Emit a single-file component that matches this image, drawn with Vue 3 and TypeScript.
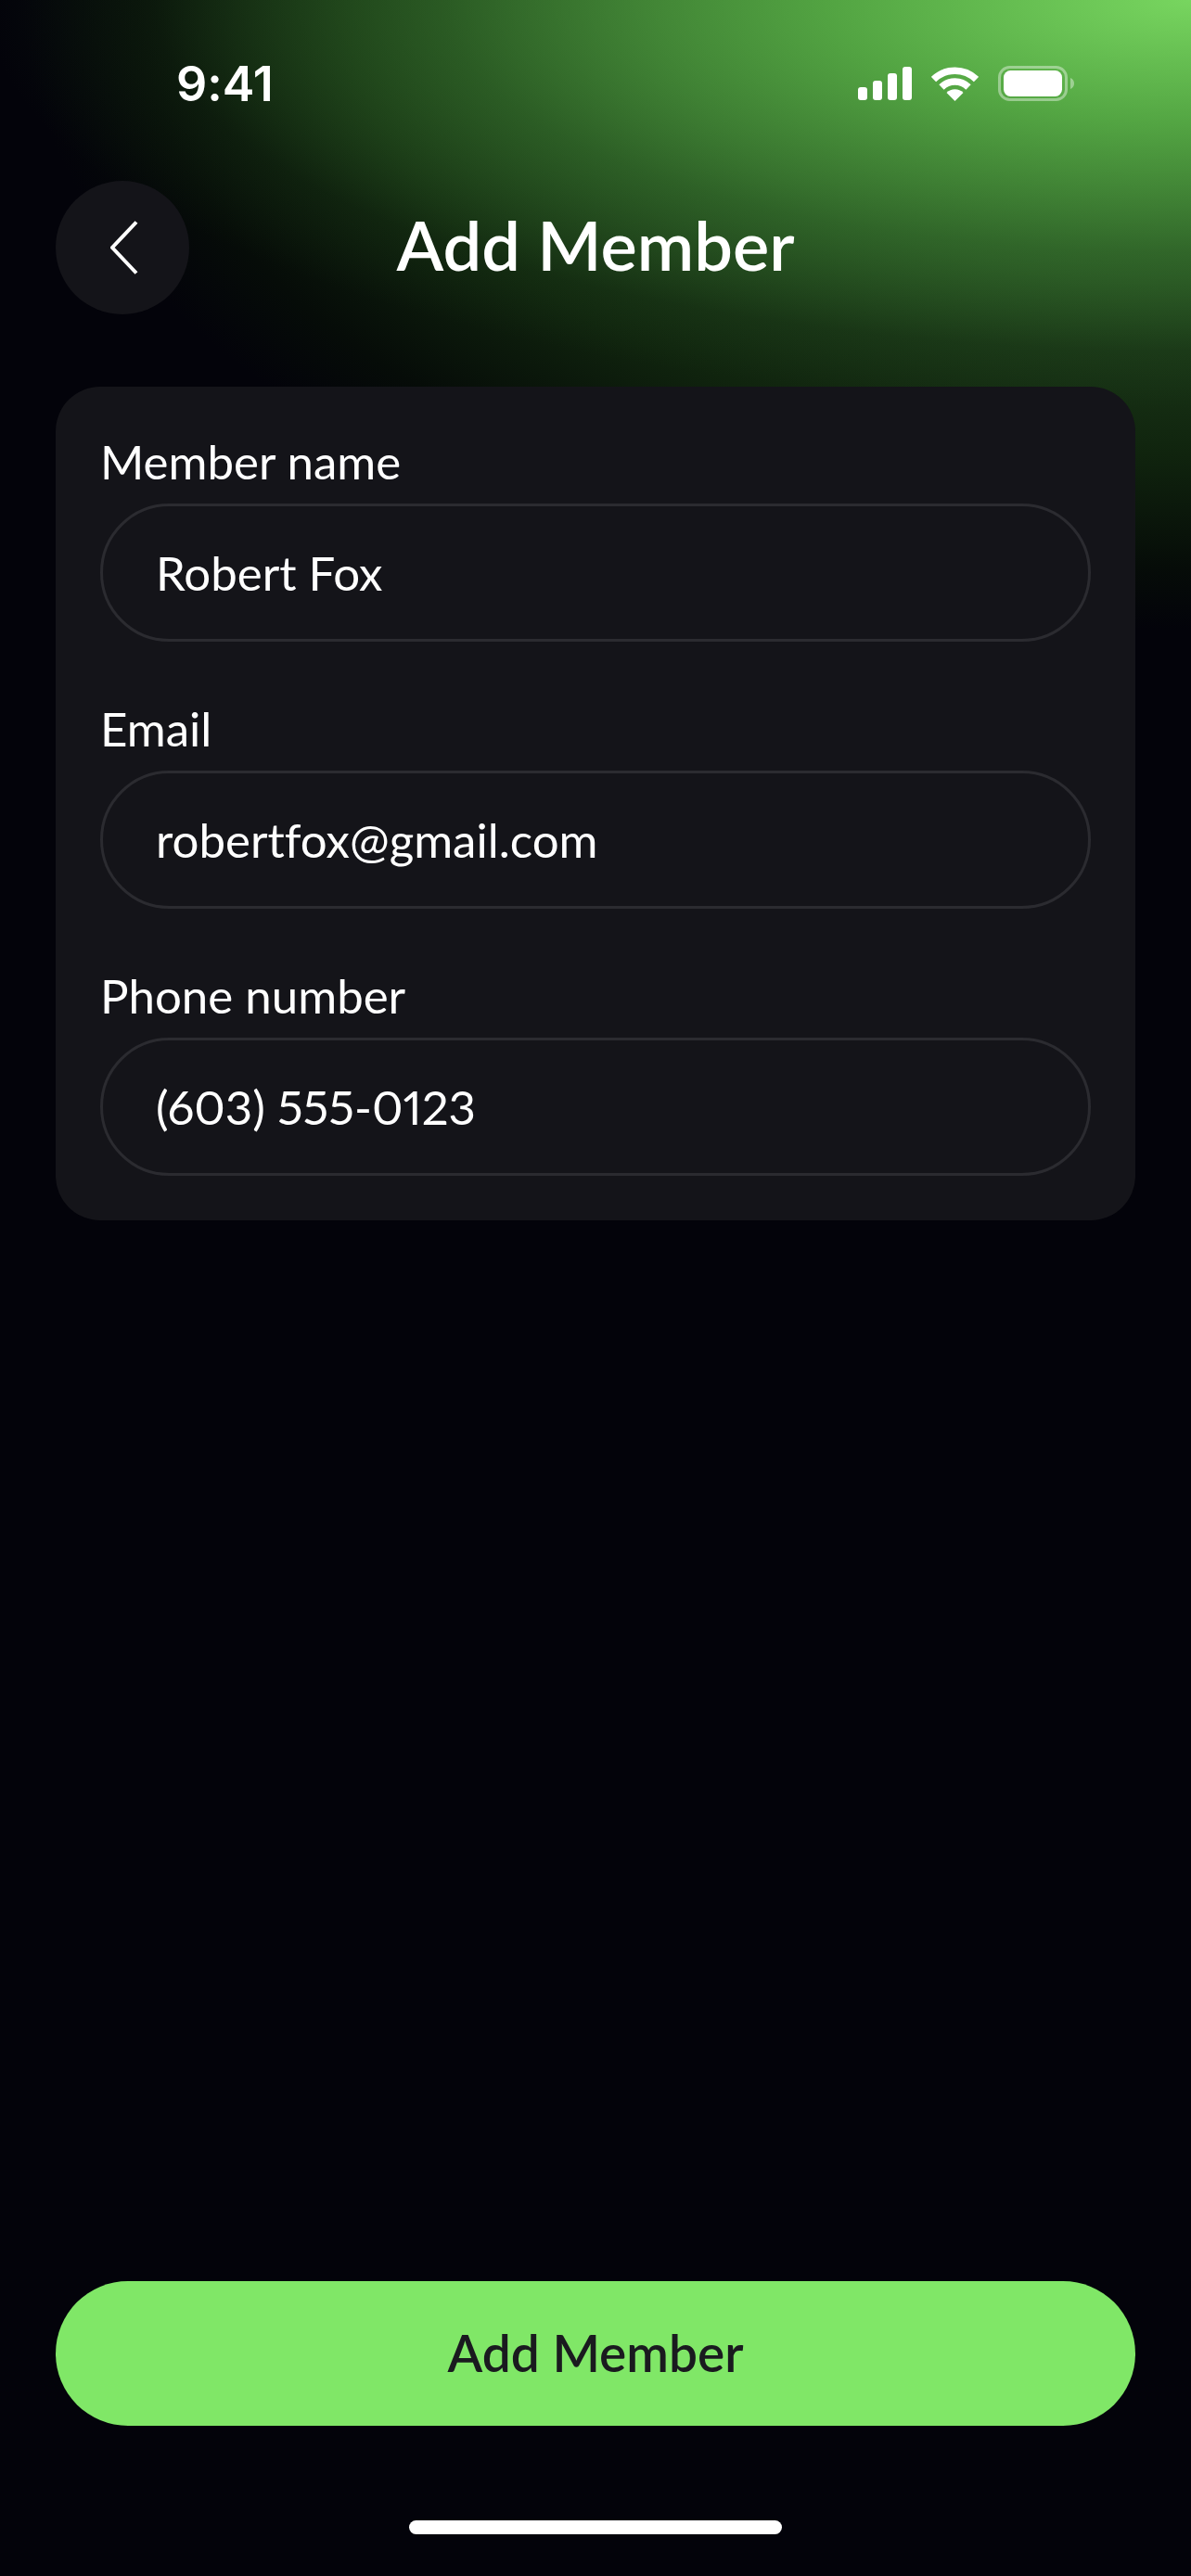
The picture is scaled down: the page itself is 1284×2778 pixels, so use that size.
<script setup lang="ts">
interface Field {
  label: string
  value: string
}

const fields: Field[] = [
  { label: 'Member name', value: 'Robert Fox' },
  { label: 'Email', value: 'robertfox@gmail.com' },
  { label: 'Phone number', value: '(603) 555-0123' },
]
</script>

<template>
  <div class="page">
    <div class="status-bar">
      <span class="time">9:41</span>
      <div class="status-icons">
        <svg width="58" height="36" viewBox="0 0 58 36" fill="#fff">
          <rect x="0" y="22" width="10" height="14" rx="3" />
          <rect x="16" y="15" width="10" height="21" rx="3" />
          <rect x="32" y="7" width="10" height="29" rx="3" />
          <rect x="48" y="0" width="10" height="36" rx="3" />
        </svg>
        <svg width="51" height="37" viewBox="0 0 51 37" fill="none" stroke="#fff">
          <path d="M2.5 13.5a33 33 0 0 1 46 0" stroke-width="7.5" />
          <path d="M11 22a20.5 20.5 0 0 1 29 0" stroke-width="7.5" />
          <path d="M16.5 28a12.8 12.8 0 0 1 18 0L25.5 37z" fill="#fff" stroke="none" />
        </svg>
        <svg width="82" height="38" viewBox="0 0 82 38" fill="none">
          <rect x="1.5" y="1.5" width="72" height="35" rx="11" stroke="#fff" stroke-opacity="0.4" stroke-width="3" />
          <rect x="6" y="5" width="63" height="28" rx="7.5" fill="#fff" />
          <path d="M78 13c2.5 1 4 3.2 4 6s-1.5 5-4 6z" fill="#fff" fill-opacity="0.4" />
        </svg>
      </div>
    </div>

    <header class="header">
      <button class="back" type="button" aria-label="Back">
        <svg width="30" height="58" viewBox="0 0 30 58" fill="none" stroke="#fff" stroke-width="4">
          <path d="M28 1.5 2 29l26 27.5" />
        </svg>
      </button>
      <h1>Add Member</h1>
    </header>

    <section class="card">
      <div v-for="field in fields" :key="field.label" class="field">
        <label>{{ field.label }}</label>
        <div class="input">{{ field.value }}</div>
      </div>
    </section>

    <button class="submit" type="button">Add Member</button>
    <div class="home-indicator"></div>
  </div>
</template>

<style scoped>
.page {
  width: 1284px;
  height: 2778px;
  display: flex;
  flex-direction: column;
  overflow: hidden;
  color: #fff;
  font-family: Lato, "Open Sans", sans-serif;
  font-variant-ligatures: none;
  background-color: #03030a;
  background-image:
    radial-gradient(ellipse 1300px 440px at 100% 0, rgba(126, 224, 100, 0.92) 0%, rgba(96, 190, 76, 0.78) 30%, rgba(66, 140, 54, 0.48) 62%, rgba(38, 84, 32, 0.16) 86%, rgba(20, 40, 20, 0) 100%),
    radial-gradient(ellipse 1260px 680px at 100% 0, #2c5928 0%, #1f401c 45%, #10240e 72%, #060c08 90%, rgba(3, 3, 10, 0) 100%);
}

.status-bar {
  height: 195px;
  flex: none;
  display: flex;
  align-items: flex-start;
  justify-content: space-between;
  padding: 60px 126px 0 190px;
  box-sizing: border-box;
}

.time {
  font-family: Inter, sans-serif;
  font-size: 52px;
  font-weight: 600;
  line-height: 62px;
}

.status-icons {
  display: flex;
  align-items: center;
  gap: 21px;
  margin-top: 11px;
}

.status-icons svg {
  display: block;
}

.header {
  display: grid;
  grid-template-columns: 144px 1fr 144px;
  align-items: center;
  padding: 0 60px;
}

.header h1 {
  grid-column: 2;
  margin: -6px 0 0;
  text-align: center;
  font-size: 74px;
  font-weight: 600;
  line-height: 144px;
}

.back {
  width: 144px;
  height: 144px;
  padding: 0 0 0 3px;
  border: none;
  border-radius: 50%;
  background: #141419;
  display: flex;
  align-items: center;
  justify-content: center;
}

.card {
  margin: 78px 60px 0;
  padding: 48px;
  border-radius: 48px;
  background: #141419;
  display: flex;
  flex-direction: column;
  gap: 61px;
}

.field label {
  display: block;
  font-size: 51px;
  line-height: 66px;
  margin-bottom: 12px;
}

.input {
  height: 149px;
  box-sizing: border-box;
  padding: 0 57px;
  display: flex;
  align-items: center;
  border: 3px solid #2b2b30;
  border-radius: 75px;
  font-size: 51px;
  font-variant-numeric: proportional-nums;
}

.submit {
  margin: auto 60px 0;
  height: 156px;
  flex: none;
  border: none;
  border-radius: 78px;
  background: #80e767;
  color: #1a1a1f;
  font-family: inherit;
  font-size: 55px;
  font-weight: 600;
  padding-bottom: 3px;
}

.home-indicator {
  flex: none;
  width: 402px;
  height: 15px;
  margin: 102px auto 45px;
  border-radius: 8px;
  background: #fff;
}
</style>
